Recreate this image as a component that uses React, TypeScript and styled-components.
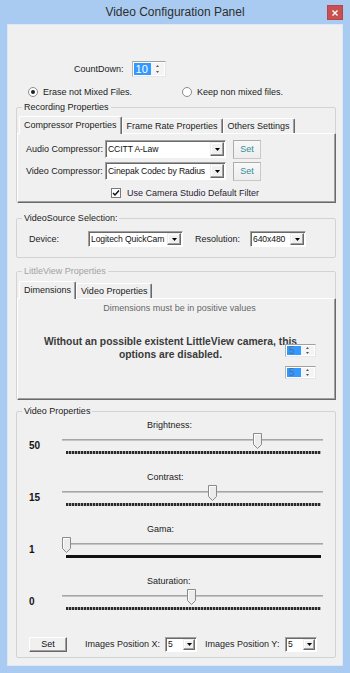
import React from "react";
import styled, { createGlobalStyle, css } from "styled-components";

const GlobalStyle = createGlobalStyle`
  html, body { margin: 0; padding: 0; }
  body {
    background: #a9cbf1;
    font-family: "Liberation Sans", Arial, sans-serif;
    font-size: 9px;
    color: #1b1b1b;
  }
  *, *::before, *::after { box-sizing: border-box; }
`;

const Window = styled.div`
  width: 350px;
  height: 673px;
  display: flex;
  flex-direction: column;
  padding: 0 7px 7px;
  background: #a9cbf1;
`;

const TitleBar = styled.div`
  flex: none;
  height: 24px;
  display: grid;
  grid-template-columns: 1fr auto 1fr;
  align-items: start;
`;

const Title = styled.div`
  grid-column: 2;
  font-size: 12px;
  line-height: 25px;
  color: #2e2e2e;
  white-space: nowrap;
`;

const CloseButton = styled.div`
  grid-column: 3;
  justify-self: end;
  margin-top: 5px;
  width: 16px;
  height: 15px;
  background: #c75050;
  border: 1px solid #b84444;
  display: flex;
  align-items: center;
  justify-content: center;
`;

const Client = styled.div`
  flex: 1;
  display: flex;
  flex-direction: column;
  padding: 36px 6px 0 8px;
  background: #f0f0f0;
  border: 1px solid #dce8f6;
`;

const CountRow = styled.div`
  display: flex;
  align-items: center;
  height: 16px;
  padding-left: 58px;
  gap: 8px;
`;

const Label = styled.span<{ $w?: number; $color?: string }>`
  display: inline-block;
  white-space: nowrap;
  ${(p) => p.$w !== undefined && css`width: ${p.$w}px; flex: none;`}
  color: ${(p) => p.$color ?? "#1b1b1b"};
`;

/* ---------- spin box ---------- */
const SpinBox = styled.div<{ $w: number; $h: number }>`
  width: ${(p) => p.$w}px;
  height: ${(p) => p.$h}px;
  flex: none;
  display: flex;
  padding: 1px;
  background: #fff;
  border-top: 1px solid #a0a0a0;
  border-left: 1px solid #b4b4b4;
  border-right: 1px solid #e6e6e6;
  border-bottom: 1px solid #e6e6e6;
`;

const SpinField = styled.div<{ $size: number; $dim?: boolean }>`
  flex: 1;
  background: #3399ff;
  color: ${(p) => (p.$dim ? "#4d6f9c" : "#ffffff")};
  font-size: ${(p) => p.$size}px;
  line-height: 1;
  display: flex;
  align-items: center;
  padding-left: 2px;
`;

const SpinButtons = styled.div<{ $w: number }>`
  width: ${(p) => p.$w}px;
  flex: none;
  display: flex;
  flex-direction: column;
  align-items: center;
  justify-content: space-around;
  background: #f4f4f4;
`;

const Spin: React.FC<{ w: number; h: number; value: string; size: number; dim?: boolean; bw: number }> = ({
  w,
  h,
  value,
  size,
  dim,
  bw,
}) => (
  <SpinBox $w={w} $h={h}>
    <SpinField $size={size} $dim={dim}>
      {value}
    </SpinField>
    <SpinButtons $w={bw}>
      <svg width="3" height="2" viewBox="0 0 3 2">
        <path d="M0 2L1.5 0L3 2Z" fill="#555" />
      </svg>
      <svg width="3" height="2" viewBox="0 0 3 2">
        <path d="M0 0L3 0L1.5 2Z" fill="#555" />
      </svg>
    </SpinButtons>
  </SpinBox>
);

/* ---------- radio ---------- */
const RadioRow = styled.div`
  display: flex;
  align-items: center;
  height: 12px;
  margin-top: 9px;
  padding-left: 12px;
`;

const RadioItem = styled.div<{ $w?: number }>`
  display: flex;
  align-items: center;
  gap: 5px;
  ${(p) => p.$w !== undefined && css`width: ${p.$w}px;`}
`;

const RadioCircle = styled.span<{ $checked?: boolean }>`
  width: 10px;
  height: 10px;
  border-radius: 50%;
  border: 1px solid #8c8c8c;
  background: #fff;
  display: flex;
  align-items: center;
  justify-content: center;
  &::after {
    content: "";
    width: 4px;
    height: 4px;
    border-radius: 50%;
    background: ${(p) => (p.$checked ? "#222" : "transparent")};
  }
`;

/* ---------- group box ---------- */
const Group = styled.fieldset<{ $mt: number }>`
  margin: ${(p) => p.$mt}px 0 0 0;
  padding: 0;
  min-width: 0;
  border: 1px solid #d3d3d3;
  border-radius: 2px;
`;

const Legend = styled.legend<{ $disabled?: boolean }>`
  padding: 0 2px;
  margin-left: 5px;
  line-height: 12px;
  font-size: 9px;
  color: ${(p) => (p.$disabled ? "#a2a2a2" : "#1b1b1b")};
`;

/* ---------- tabs ---------- */
const TabControl = styled.div<{ $mt: number }>`
  margin: ${(p) => p.$mt}px -1px -1px 0;
  display: flex;
  flex-direction: column;
`;

const TabStrip = styled.div`
  display: flex;
  align-items: flex-end;
  height: 17px;
  padding-left: 2px;
  position: relative;
  z-index: 1;
`;

const Tab = styled.div<{ $active?: boolean }>`
  height: ${(p) => (p.$active ? 18 : 15)}px;
  margin-bottom: ${(p) => (p.$active ? -1 : 0)}px;
  padding: 0 4px ${(p) => (p.$active ? 1 : 0)}px;
  display: flex;
  align-items: center;
  white-space: nowrap;
  background: #f0f0f0;
  border-top: 1px solid #ffffff;
  border-left: 1px solid #ffffff;
  border-right: 1px solid #696969;
  box-shadow: inset -1px 0 0 #a0a0a0;
  border-radius: 2px 2px 0 0;
`;

const TabPage = styled.div<{ $h: number }>`
  height: ${(p) => p.$h}px;
  position: relative;
  display: flex;
  flex-direction: column;
  background: #f0f0f0;
  border-top: 1px solid #ffffff;
  border-left: 1px solid #ffffff;
  border-right: 1px solid #696969;
  border-bottom: 1px solid #696969;
  box-shadow: inset -1px -1px 0 #a0a0a0;
`;

/* ---------- combo ---------- */
const ComboBox = styled.div<{ $w: number; $h: number }>`
  width: ${(p) => p.$w}px;
  height: ${(p) => p.$h}px;
  flex: none;
  display: flex;
  background: #fff;
  border-top: 1px solid #a0a0a0;
  border-left: 1px solid #a0a0a0;
  border-right: 1px solid #fff;
  border-bottom: 1px solid #fff;
  box-shadow: inset 1px 1px 0 #696969;
  padding: 1px;
`;

const ComboText = styled.div`
  flex: 1;
  min-width: 0;
  overflow: hidden;
  white-space: nowrap;
  display: flex;
  align-items: center;
  padding-left: 1px;
  font-size: 8.6px;
  letter-spacing: -0.1px;
  color: #111;
`;

const ComboDrop = styled.div<{ $w: number }>`
  width: ${(p) => p.$w}px;
  flex: none;
  display: flex;
  align-items: center;
  justify-content: center;
  background: #f0f0f0;
  border-top: 1px solid #ececec;
  border-left: 1px solid #ececec;
  border-right: 1px solid #696969;
  border-bottom: 1px solid #696969;
  box-shadow: inset -1px -1px 0 #a0a0a0, inset 1px 1px 0 #fff;
`;

const Combo: React.FC<{ w: number; h: number; text: string; bw?: number }> = ({ w, h, text, bw = 14 }) => (
  <ComboBox $w={w} $h={h}>
    <ComboText>{text}</ComboText>
    <ComboDrop $w={bw}>
      <svg width="5" height="3" viewBox="0 0 5 3">
        <path d="M0 0H5L2.5 3Z" fill="#000" />
      </svg>
    </ComboDrop>
  </ComboBox>
);

/* ---------- buttons ---------- */
const PushButton = styled.div<{ $w: number; $h: number; $flat?: boolean }>`
  width: ${(p) => p.$w}px;
  height: ${(p) => p.$h}px;
  flex: none;
  display: flex;
  align-items: center;
  justify-content: center;
  font-size: 9px;
  ${(p) =>
    p.$flat
      ? css`
          color: #2f8d99;
          background: linear-gradient(#f8f8f8, #ededed);
          border: 1px solid #acacac;
          border-right-color: #c8c8c8;
          border-bottom-color: #c8c8c8;
        `
      : css`
          color: #111;
          background: #f0f0f0;
          border-top: 1px solid #ffffff;
          border-left: 1px solid #ffffff;
          border-right: 1px solid #696969;
          border-bottom: 1px solid #696969;
          box-shadow: inset -1px -1px 0 #a0a0a0;
        `}
`;

/* ---------- recording page ---------- */
const CompressorPage = styled.div`
  display: flex;
  flex-direction: column;
  padding: 6px 0 0 8px;
`;

const FormRow = styled.div<{ $mt?: number }>`
  display: flex;
  align-items: center;
  height: 18px;
  margin-top: ${(p) => p.$mt ?? 0}px;
`;

const CheckRow = styled.div`
  display: flex;
  align-items: center;
  gap: 6px;
  height: 10px;
  margin-top: 8px;
  padding-left: 85px;
`;

const CheckBox = styled.span`
  width: 10px;
  height: 10px;
  flex: none;
  background: #fff;
  border: 1px solid #7a7a7a;
  display: flex;
  align-items: center;
  justify-content: center;
`;

/* ---------- video source ---------- */
const SourceBody = styled.div`
  display: flex;
  align-items: center;
  height: 16px;
  margin: 7px 0 10px;
  padding-left: 12px;
`;

/* ---------- little view ---------- */
const Hint = styled.div`
  margin-top: 4px;
  padding-left: 6px;
  text-align: center;
  line-height: 11px;
  color: #676767;
`;

const Warning = styled.div`
  margin-top: 21px;
  padding-right: 12px;
  text-align: center;
  font-size: 10.3px;
  font-weight: bold;
  line-height: 13px;
  color: #3a3a3a;
  white-space: nowrap;
`;

const SpinStack = styled.div`
  position: absolute;
  left: 267px;
  top: 45px;
  display: flex;
  flex-direction: column;
  gap: 9px;
`;

/* ---------- video properties ---------- */
const VideoBody = styled.div`
  display: flex;
  flex-direction: column;
  padding: 3px 0 6px 0;
`;

const SliderBlock = styled.div`
  display: flex;
  flex-direction: column;
  & + & {
    margin-top: 16px;
  }
`;

const SliderCaption = styled.div`
  padding-left: 130px;
  height: 11px;
  line-height: 11px;
  margin-bottom: 1px;
`;

const SliderRow = styled.div`
  display: flex;
  height: 24px;
`;

const SliderValue = styled.div`
  width: 45px;
  flex: none;
  padding-left: 12px;
  margin-top: 8px;
  line-height: 12px;
  font-size: 10px;
  font-weight: bold;
  color: #151515;
`;

const Track = styled.div`
  position: relative;
  width: 261px;
  height: 24px;
  display: flex;
  flex-direction: column;
`;

const Channel = styled.div`
  margin-top: 7px;
  height: 2px;
  background: #a6a6a6;
  border-bottom: 1px solid #c4c4c4;
`;

const Ticks = styled.div<{ $dense?: boolean }>`
  margin: 10px 2px 0 4px;
  height: 3px;
  background: ${(p) =>
    p.$dense ? "#111" : "repeating-linear-gradient(90deg, #2a2a2a 0 2px, #a8a8a8 2px 3px)"};
`;

const Thumb = styled.svg`
  position: absolute;
  top: 1px;
`;

const BottomRow = styled.div`
  display: flex;
  align-items: center;
  height: 14px;
  margin-top: 25px;
  padding-left: 12px;
`;

const sliders = [
  { label: "Brightness:", value: "50", pos: 0.75, dense: false },
  { label: "Contrast:", value: "15", pos: 0.573, dense: false },
  { label: "Gama:", value: "1", pos: 0, dense: true },
  { label: "Saturation:", value: "0", pos: 0.494, dense: false },
];

const Slider: React.FC<{ label: string; value: string; pos: number; dense: boolean }> = ({
  label,
  value,
  pos,
  dense,
}) => (
  <SliderBlock>
    <SliderCaption>{label}</SliderCaption>
    <SliderRow>
      <SliderValue>{value}</SliderValue>
      <Track>
        <Channel />
        <Ticks $dense={dense} />
        <Thumb width="9" height="16" viewBox="0 0 9 16" style={{ left: 4 + pos * 255 - 4.5 }}>
          <path d="M0.5 0.5H8.5V11.5L4.5 15.5L0.5 11.5Z" fill="#ececec" stroke="#8a8a8a" />
          <path d="M1.5 1.5H7.5" stroke="#ffffff" />
          <path d="M1.5 1.5V11" stroke="#ffffff" />
        </Thumb>
      </Track>
    </SliderRow>
  </SliderBlock>
);

export default function App() {
  return (
    <>
      <GlobalStyle />
      <Window>
        <TitleBar>
          <Title>Video Configuration Panel</Title>
          <CloseButton>
            <svg width="6" height="6" viewBox="0 0 6 6">
              <path d="M0.5 0.5L5.5 5.5M5.5 0.5L0.5 5.5" stroke="#fff" strokeWidth="1.4" />
            </svg>
          </CloseButton>
        </TitleBar>
        <Client>
          <CountRow>
            <Label>CountDown:</Label>
            <Spin w={34} h={16} value="10" size={11} bw={13} />
          </CountRow>

          <RadioRow>
            <RadioItem $w={154}>
              <RadioCircle $checked />
              <Label>Erase not Mixed Files.</Label>
            </RadioItem>
            <RadioItem>
              <RadioCircle />
              <Label>Keep non mixed files.</Label>
            </RadioItem>
          </RadioRow>

          <Group $mt={3}>
            <Legend>Recording Properties</Legend>
            <TabControl $mt={3}>
              <TabStrip>
                <Tab $active>Compressor Properties</Tab>
                <Tab>Frame Rate Properties</Tab>
                <Tab>Others Settings</Tab>
              </TabStrip>
              <TabPage $h={70}>
                <CompressorPage>
                  <FormRow>
                    <Label $w={79}>Audio Compressor:</Label>
                    <Combo w={121} h={18} text="CCITT A-Law" />
                    <PushButton $flat $w={28} $h={19} style={{ marginLeft: 7 }}>
                      Set
                    </PushButton>
                  </FormRow>
                  <FormRow $mt={4}>
                    <Label $w={79}>Video Compressor:</Label>
                    <Combo w={121} h={18} text="Cinepak Codec by Radius" />
                    <PushButton $flat $w={28} $h={19} style={{ marginLeft: 7 }}>
                      Set
                    </PushButton>
                  </FormRow>
                  <CheckRow>
                    <CheckBox>
                      <svg width="8" height="8" viewBox="0 0 8 8">
                        <path d="M1 4L3 6L7 1.5" stroke="#111" strokeWidth="1.5" fill="none" />
                      </svg>
                    </CheckBox>
                    <Label $color="#2a2333">Use Camera Studio Default Filter</Label>
                  </CheckRow>
                </CompressorPage>
              </TabPage>
            </TabControl>
          </Group>

          <Group $mt={9}>
            <Legend>VideoSource Selection:</Legend>
            <SourceBody>
              <Label $w={59}>Device:</Label>
              <Combo w={95} h={16} text="Logitech QuickCam" />
              <Label $w={55} style={{ marginLeft: 12 }}>
                Resolution:
              </Label>
              <Combo w={56} h={16} text="640x480" />
            </SourceBody>
          </Group>

          <Group $mt={7}>
            <Legend $disabled>LittleView Properties</Legend>
            <TabControl $mt={4}>
              <TabStrip>
                <Tab $active>Dimensions</Tab>
                <Tab>Video Properties</Tab>
              </TabStrip>
              <TabPage $h={102}>
                <Hint>Dimensions must be in positive values</Hint>
                <Warning>
                  Without an possible existent LittleView camera, this
                  <br />
                  options are disabled.
                </Warning>
                <SpinStack>
                  <Spin w={31} h={13} value="5" size={10} dim bw={13} />
                  <Spin w={31} h={13} value="5" size={10} dim bw={13} />
                </SpinStack>
              </TabPage>
            </TabControl>
          </Group>

          <Group $mt={5}>
            <Legend>Video Properties</Legend>
            <VideoBody>
              {sliders.map((s) => (
                <Slider key={s.label} {...s} />
              ))}
              <BottomRow>
                <PushButton $w={38} $h={15}>
                  Set
                </PushButton>
                <Label $w={80} style={{ marginLeft: 18 }}>
                  Images Position X:
                </Label>
                <Combo w={32} h={15} text="5" bw={12} />
                <Label $w={80} style={{ marginLeft: 8 }}>
                  Images Position Y:
                </Label>
                <Combo w={32} h={15} text="5" bw={12} />
              </BottomRow>
            </VideoBody>
          </Group>
        </Client>
      </Window>
    </>
  );
}
